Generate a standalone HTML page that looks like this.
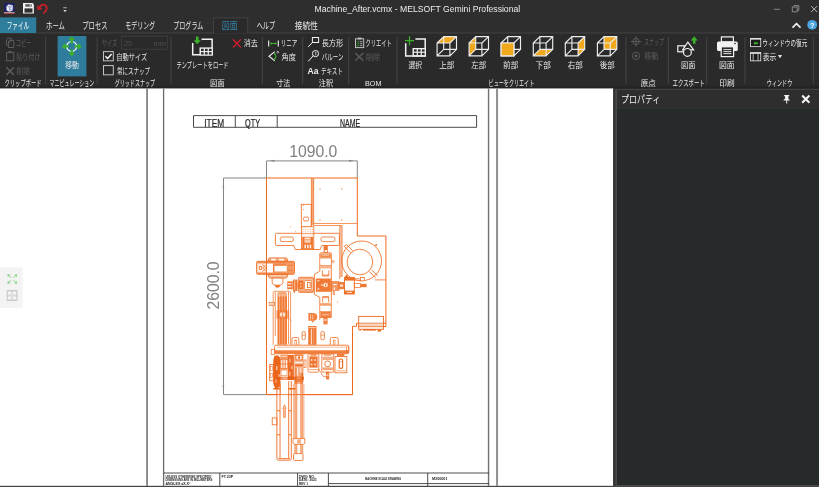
<!DOCTYPE html>
<html lang="ja"><head><meta charset="utf-8"><title>Machine_After.vcmx - MELSOFT Gemini Professional</title>
<style>
html,body{margin:0;padding:0;background:#fff}
body{width:819px;height:487px;overflow:hidden;position:relative;font-family:"Liberation Sans","Noto Sans CJK JP",sans-serif}
svg{position:absolute;left:0;top:0;display:block}
text{font-family:"Liberation Sans","Noto Sans CJK JP",sans-serif}
.n{font-family:"Liberation Sans",sans-serif}
</style></head><body>
<svg width="819" height="487" viewBox="0 0 819 487">
<defs><filter id="soft" x="-2%" y="-2%" width="104%" height="104%"><feGaussianBlur stdDeviation="0.32"/></filter></defs>
<g filter="url(#soft)">
<!-- window chrome -->
<rect x="-6" y="-6" width="831" height="499" fill="#ffffff"/>
<rect x="613.3" y="80" width="212" height="413" fill="#252525"/>
<rect x="613.3" y="88.8" width="212" height="405" fill="#333333"/>
<rect x="615.4" y="88.8" width="210" height="405" fill="#494949"/>
<rect x="617" y="89.8" width="208" height="18.6" fill="#2d2d2d"/>
<rect x="617" y="108.4" width="208" height="376.6" fill="#27292a"/>
<rect x="-6" y="-6" width="831" height="39" fill="#2f2f2f"/>
<rect x="-6" y="33" width="831" height="55.45" fill="#2a2a2a"/>
<rect x="-6" y="32.5" width="831" height="1" fill="#404040"/>
<rect x="-6" y="86.9" width="831" height="1.1" fill="#232323"/>
<!-- file tab -->
<rect x="-6" y="17.4" width="42.2" height="15.6" fill="#2d7d9c"/>
<!-- active tab -->
<path d="M213.5 33.2V17.8H247.7V33.2" fill="#2a2a2a" stroke="#414141" stroke-width="1"/>
<!-- move button highlight -->
<rect x="57.6" y="36" width="28.8" height="40.4" fill="#2d7d9c"/>
<!-- group separators -->
<g fill="#454545">
<rect x="45.2" y="37" width="1" height="47"/><rect x="96.6" y="37" width="1" height="47"/>
<rect x="170.4" y="37" width="1" height="47"/><rect x="261.8" y="37" width="1" height="47"/>
<rect x="302.2" y="37" width="1" height="47"/><rect x="348.2" y="37" width="1" height="47"/>
<rect x="396.6" y="37" width="1" height="47"/><rect x="625.4" y="37" width="1" height="47"/>
<rect x="667.8" y="37" width="1" height="47"/><rect x="706.2" y="37" width="1" height="47"/>
<rect x="744.4" y="37" width="1" height="47"/><rect x="812.8" y="37" width="1" height="47"/>
</g>
<!-- title text -->
<text x="314.6" y="12.4" font-size="9.1" fill="#ededed" textLength="205.6" lengthAdjust="spacingAndGlyphs">Machine_After.vcmx - MELSOFT Gemini Professional</text>
<!-- size input -->
<rect x="121.6" y="36.1" width="46" height="13.2" fill="#2a2a2a" stroke="#3d3d3d" stroke-width="1"/>
<text x="124" y="46" font-size="7.4" fill="#4f4f4f">25</text>
<text x="153.6" y="46" font-size="7.4" fill="#4f4f4f">mm</text>
<!-- BOM / Aa -->
<text x="365" y="85.6" font-size="7.8" fill="#eeeeee" textLength="16.4" lengthAdjust="spacingAndGlyphs">BOM</text>
<text x="307.6" y="74" font-size="8.6" font-weight="bold" fill="#eeeeee" textLength="11" lengthAdjust="spacingAndGlyphs">Aa</text>
<!-- canvas/panel splitter and properties panel -->
<rect x="-6" y="485.8" width="831" height="7" fill="#454545"/>
<!-- left floating toolbar -->
<rect x="-6" y="267.4" width="28.6" height="40.4" fill="#f3f3f3"/>

<g id="labels">
<text x="6.68" y="29.17" font-size="9.4" fill="#ffffff" textLength="22.55" lengthAdjust="spacingAndGlyphs">ファイル</text>
<text x="46.05" y="29.17" font-size="9.4" fill="#e8e8e8" textLength="18.82" lengthAdjust="spacingAndGlyphs">ホーム</text>
<text x="82.25" y="29.17" font-size="9.4" fill="#e8e8e8" textLength="25.33" lengthAdjust="spacingAndGlyphs">プロセス</text>
<text x="125.34" y="29.17" font-size="9.4" fill="#e8e8e8" textLength="29.86" lengthAdjust="spacingAndGlyphs">モデリング</text>
<text x="173.28" y="29.17" font-size="9.4" fill="#e8e8e8" textLength="30.07" lengthAdjust="spacingAndGlyphs">プログラム</text>
<text x="221.84" y="29.17" font-size="9.4" fill="#3584aa" textLength="16.07" lengthAdjust="spacingAndGlyphs">図面</text>
<text x="256.67" y="29.17" font-size="9.4" fill="#e8e8e8" textLength="18.44" lengthAdjust="spacingAndGlyphs">ヘルプ</text>
<text x="294.82" y="29.17" font-size="9.4" fill="#e8e8e8" textLength="23.03" lengthAdjust="spacingAndGlyphs">接続性</text>
<text x="15.66" y="45.93" font-size="8.25" fill="#5c5c5c" textLength="15.81" lengthAdjust="spacingAndGlyphs">コピー</text>
<text x="16.31" y="59.93" font-size="8.25" fill="#5c5c5c" textLength="24.08" lengthAdjust="spacingAndGlyphs">貼り付け</text>
<text x="16.16" y="73.94" font-size="8.25" fill="#5c5c5c" textLength="14" lengthAdjust="spacingAndGlyphs">削除</text>
<text x="4.52" y="85.73" font-size="8.25" fill="#e8e8e8" textLength="37.11" lengthAdjust="spacingAndGlyphs">クリップボード</text>
<text x="65.23" y="67.73" font-size="8.25" fill="#e8e8e8" textLength="13.76" lengthAdjust="spacingAndGlyphs">移動</text>
<text x="49.49" y="85.73" font-size="8.25" fill="#e8e8e8" textLength="44.87" lengthAdjust="spacingAndGlyphs">マニピュレーション</text>
<text x="101.67" y="45.93" font-size="8.25" fill="#5c5c5c" textLength="15.52" lengthAdjust="spacingAndGlyphs">サイズ</text>
<text x="116.33" y="59.93" font-size="8.25" fill="#e8e8e8" textLength="30.87" lengthAdjust="spacingAndGlyphs">自動サイズ</text>
<text x="116.90" y="73.94" font-size="8.25" fill="#e8e8e8" textLength="33.19" lengthAdjust="spacingAndGlyphs">常にスナップ</text>
<text x="114.74" y="85.73" font-size="8.25" fill="#e8e8e8" textLength="40.35" lengthAdjust="spacingAndGlyphs">グリッドスナップ</text>
<text x="176.51" y="67.73" font-size="8.25" fill="#e8e8e8" textLength="52.09" lengthAdjust="spacingAndGlyphs">テンプレートをロード</text>
<text x="243.76" y="45.93" font-size="8.25" fill="#e8e8e8" textLength="14.06" lengthAdjust="spacingAndGlyphs">消去</text>
<text x="209.89" y="85.73" font-size="8.25" fill="#e8e8e8" textLength="14.99" lengthAdjust="spacingAndGlyphs">図面</text>
<text x="280.85" y="45.93" font-size="8.25" fill="#e8e8e8" textLength="16.47" lengthAdjust="spacingAndGlyphs">リニア</text>
<text x="281.59" y="59.93" font-size="8.25" fill="#e8e8e8" textLength="14.26" lengthAdjust="spacingAndGlyphs">角度</text>
<text x="276.16" y="85.73" font-size="8.25" fill="#e8e8e8" textLength="14.02" lengthAdjust="spacingAndGlyphs">寸法</text>
<text x="321.64" y="45.93" font-size="8.25" fill="#e8e8e8" textLength="21.57" lengthAdjust="spacingAndGlyphs">長方形</text>
<text x="321.71" y="59.93" font-size="8.25" fill="#e8e8e8" textLength="21.68" lengthAdjust="spacingAndGlyphs">バルーン</text>
<text x="321.00" y="73.94" font-size="8.25" fill="#e8e8e8" textLength="21.77" lengthAdjust="spacingAndGlyphs">テキスト</text>
<text x="318.76" y="85.73" font-size="8.25" fill="#e8e8e8" textLength="14.42" lengthAdjust="spacingAndGlyphs">注釈</text>
<text x="365.55" y="45.93" font-size="8.25" fill="#e8e8e8" textLength="26.2" lengthAdjust="spacingAndGlyphs">クリエイト</text>
<text x="365.64" y="59.93" font-size="8.25" fill="#5c5c5c" textLength="14.53" lengthAdjust="spacingAndGlyphs">削除</text>
<text x="408.40" y="67.73" font-size="8.25" fill="#e8e8e8" textLength="13.52" lengthAdjust="spacingAndGlyphs">選択</text>
<text x="439.14" y="67.73" font-size="8.25" fill="#e8e8e8" textLength="15.11" lengthAdjust="spacingAndGlyphs">上部</text>
<text x="471.32" y="67.73" font-size="8.25" fill="#e8e8e8" textLength="14.92" lengthAdjust="spacingAndGlyphs">左部</text>
<text x="503.12" y="67.73" font-size="8.25" fill="#e8e8e8" textLength="15.13" lengthAdjust="spacingAndGlyphs">前部</text>
<text x="535.59" y="67.73" font-size="8.25" fill="#e8e8e8" textLength="15.16" lengthAdjust="spacingAndGlyphs">下部</text>
<text x="567.80" y="67.73" font-size="8.25" fill="#e8e8e8" textLength="14.94" lengthAdjust="spacingAndGlyphs">右部</text>
<text x="599.86" y="67.73" font-size="8.25" fill="#e8e8e8" textLength="14.88" lengthAdjust="spacingAndGlyphs">後部</text>
<text x="488.59" y="85.73" font-size="8.25" fill="#e8e8e8" textLength="45.66" lengthAdjust="spacingAndGlyphs">ビューをクリエイト</text>
<text x="644.03" y="45.33" font-size="8.25" fill="#5c5c5c" textLength="20.06" lengthAdjust="spacingAndGlyphs">スナップ</text>
<text x="644.32" y="59.33" font-size="8.25" fill="#5c5c5c" textLength="14.08" lengthAdjust="spacingAndGlyphs">移動</text>
<text x="640.78" y="85.73" font-size="8.25" fill="#e8e8e8" textLength="15.04" lengthAdjust="spacingAndGlyphs">原点</text>
<text x="680.91" y="67.73" font-size="8.25" fill="#e8e8e8" textLength="14.46" lengthAdjust="spacingAndGlyphs">図面</text>
<text x="672.56" y="85.73" font-size="8.25" fill="#e8e8e8" textLength="32.22" lengthAdjust="spacingAndGlyphs">エクスポート</text>
<text x="719.06" y="67.73" font-size="8.25" fill="#e8e8e8" textLength="15.64" lengthAdjust="spacingAndGlyphs">図面</text>
<text x="719.24" y="85.73" font-size="8.25" fill="#e8e8e8" textLength="15.32" lengthAdjust="spacingAndGlyphs">印刷</text>
<text x="762.35" y="45.93" font-size="8.25" fill="#e8e8e8" textLength="44.93" lengthAdjust="spacingAndGlyphs">ウィンドウの復元</text>
<text x="762.84" y="59.93" font-size="8.25" fill="#e8e8e8" textLength="13.54" lengthAdjust="spacingAndGlyphs">表示</text>
<text x="766.84" y="85.73" font-size="8.25" fill="#e8e8e8" textLength="25.41" lengthAdjust="spacingAndGlyphs">ウィンドウ</text>
<text x="621.03" y="102.63" font-size="10.6" fill="#f2f2f2" textLength="39.35" lengthAdjust="spacingAndGlyphs">プロパティ</text>
</g>
<g id="icons"><rect x="4" y="3" width="10.6" height="10.6" fill="#1b2460"/>
<path d="M6.3 6.2 L8.6 4.6 L12.4 5 L13.2 7 L12.6 10.4 L9.6 11.8 L6.6 10.6 Z" fill="#f4f4fa"/>
<path d="M8.8 6.6 L10 11 M8.8 6.6 L12.4 5.6 M8.8 6.6 L6.6 6.4" stroke="#8a93c8" stroke-width=".7" fill="none"/>
<circle cx="11.3" cy="8.2" r="1.5" fill="none" stroke="#6f7ab8" stroke-width=".7"/>
<rect x="4" y="12" width="10.6" height=".7" fill="#e8e8f0"/><rect x="4" y="12.8" width="10.6" height=".9" fill="#e2563f"/>
<path d="M23 3.1H32.6L33.9 4.4V13.6H23Z" fill="#f2f2f2"/>
<rect x="25.3" y="4.2" width="6.4" height="2.5" fill="#5a5a5a"/><rect x="29.7" y="4.5" width="1.2" height="1.7" fill="#d8d8d8"/>
<rect x="24.5" y="8.4" width="8" height="4.2" fill="#2f2f2f"/>
<path d="M43.6 12.9 C47.8 10.6 47.6 5.6 44.3 4.7 C42.2 4.2 40.5 5.6 39.6 7.4" fill="none" stroke="#cc1f2b" stroke-width="1.7" stroke-linecap="round"/>
<path d="M36.9 5.0 L37.6 10.3 L42.6 8.9 Z" fill="#cc1f2b"/>
<rect x="63.2" y="7.4" width="3.6" height=".8" fill="#cfcfcf"/><path d="M63.3 9.9H66.7L65 12.2Z" fill="#cfcfcf"/>
<g fill="none" stroke="#5e5e5e" stroke-width="1">
<path d="M8.2 45.2H6.4V39.6L7.8 38.2H11.2V40.2"/>
<path d="M8.4 47.5V41.8L9.8 40.4H13.8V47.5Z"/><path d="M8.4 42H10V40.4"/>
<rect x="6.6" y="52.6" width="7.2" height="8.2"/><path d="M8.8 52.6V51.4H11.6V52.6" />
</g>
<path d="M6.4 67.2L13.8 75M13.8 67.2L6.4 75" stroke="#5e5e5e" stroke-width="1.5" fill="none"/>
<circle cx="71.7" cy="46.4" r="4.9" fill="none" stroke="#ffffff" stroke-width="1.15"/>
<path d="M71.70 36.30 L75.00 40.10 L72.85 40.10 L72.85 43.40 L70.55 43.40 L70.55 40.10 L68.40 40.10 Z" fill="#3cb02c"/>
<path d="M71.70 56.50 L68.40 52.70 L70.55 52.70 L70.55 49.40 L72.85 49.40 L72.85 52.70 L75.00 52.70 Z" fill="#3cb02c"/>
<path d="M81.80 46.40 L78.00 49.70 L78.00 47.55 L74.70 47.55 L74.70 45.25 L78.00 45.25 L78.00 43.10 Z" fill="#3cb02c"/>
<path d="M61.60 46.40 L65.40 43.10 L65.40 45.25 L68.70 45.25 L68.70 47.55 L65.40 47.55 L65.40 49.70 Z" fill="#3cb02c"/>
<rect x="103.5" y="51.6" width="9.8" height="9.2" fill="#2a2a2a" stroke="#c4c4c4" stroke-width="1"/>
<path d="M105.4 56.2L107.6 58.4L111.6 54" fill="none" stroke="#ffffff" stroke-width="1.4"/>
<rect x="103.5" y="65.6" width="9.8" height="9.2" fill="#2a2a2a" stroke="#c4c4c4" stroke-width="1"/>
<path d="M201.5 39.2H212.1V54.8H192.7V43.0" fill="none" stroke="#f2f2f2" stroke-width="1.5"/><rect x="199.5" y="47.4" width="13.3" height="8.1" fill="#f2f2f2"/><rect x="200.95" y="48.75" width="2.75" height="2.3" fill="#2a2a2a"/><rect x="200.95" y="52.20" width="2.75" height="2.3" fill="#2a2a2a"/><rect x="204.90" y="48.75" width="2.75" height="2.3" fill="#2a2a2a"/><rect x="204.90" y="52.20" width="2.75" height="2.3" fill="#2a2a2a"/><rect x="208.85" y="48.75" width="2.75" height="2.3" fill="#2a2a2a"/><rect x="208.85" y="52.20" width="2.75" height="2.3" fill="#2a2a2a"/>
<path d="M195.9 36.6H198.6V40.2H200.8L197.25 44.2L193.7 40.2H195.9Z" fill="#3cb02c"/>
<path d="M233 39.2L240.8 47.4M240.8 39.2L233 47.4" stroke="#cc1f2b" stroke-width="1.4" fill="none"/>
<path d="M268.7 40.4V46.6M278.3 40.4V46.6" stroke="#f2f2f2" stroke-width="1.1"/>
<path d="M270.6 43.5H276.4" stroke="#3cb02c" stroke-width="1"/><path d="M269.6 43.5L271.8 42.2V44.8ZM277.4 43.5L275.2 42.2V44.8Z" fill="#3cb02c"/>
<path d="M274.8 51.6L269 56.2L274.8 60.9" fill="none" stroke="#f2f2f2" stroke-width="1.1"/>
<path d="M274.6 54C276.4 55.2 276.4 57.6 274.6 58.8" fill="none" stroke="#3cb02c" stroke-width="1.1"/><path d="M273.6 53.2L275.8 53.6L274.6 55.2ZM273.6 59.6L275.8 59.2L274.6 57.6Z" fill="#3cb02c"/>
<circle cx="277.8" cy="52.2" r=".9" fill="none" stroke="#f2f2f2" stroke-width=".6"/>
<rect x="312.4" y="37.5" width="6.2" height="5" fill="none" stroke="#f2f2f2" stroke-width="1"/><path d="M312.4 42.5L308.2 46.9" stroke="#f2f2f2" stroke-width="1"/>
<circle cx="315.5" cy="53.6" r="3.1" fill="none" stroke="#f2f2f2" stroke-width="1"/><path d="M313.2 55.8L308.2 61.4" stroke="#f2f2f2" stroke-width="1"/><path d="M315.1 52.6L315.8 52V55.3" stroke="#f2f2f2" stroke-width=".7" fill="none"/>
<rect x="355.5" y="38.8" width="8.2" height="8.8" fill="none" stroke="#c0c0c0" stroke-width="1"/><rect x="357.6" y="37.6" width="4" height="1.8" fill="#c0c0c0"/>
<path d="M359.8 41.6H362.4M359.8 43.6H362.4M359.8 45.6H362.4" stroke="#c0c0c0" stroke-width=".8"/>
<path d="M356.8 41.4L357.6 42.2L358.9 40.6M356.8 43.6L357.6 44.4L358.9 42.8M356.8 45.6L357.6 46.4L358.9 44.8" stroke="#3cb02c" stroke-width=".8" fill="none"/>
<path d="M355.2 53L363.4 60.8M363.4 53L355.2 60.8" stroke="#5c5c5c" stroke-width="1.4" fill="none"/>
<path d="M415.4 38.9H425.2V55.9H405.7V43.2" fill="none" stroke="#f2f2f2" stroke-width="1.5"/><rect x="412.5" y="48.0" width="13.4" height="8.6" fill="#f2f2f2"/><rect x="413.95" y="49.35" width="2.75" height="2.3" fill="#2a2a2a"/><rect x="413.95" y="52.80" width="2.75" height="2.3" fill="#2a2a2a"/><rect x="417.90" y="49.35" width="2.75" height="2.3" fill="#2a2a2a"/><rect x="417.90" y="52.80" width="2.75" height="2.3" fill="#2a2a2a"/><rect x="421.85" y="49.35" width="2.75" height="2.3" fill="#2a2a2a"/><rect x="421.85" y="52.80" width="2.75" height="2.3" fill="#2a2a2a"/>
<path d="M405 40.7H414M409.5 36.2V45.2" stroke="#3cb02c" stroke-width="1.3"/>
<polygon points="437.1,43.0 443.7,36.6 456.5,36.6 449.9,43.0" fill="#f2a81d"/><path d="M437.1 43.0H449.9V55.8H437.1ZM443.7 36.6H456.5V49.4H443.7ZM437.1 43.0L443.7 36.6M449.9 43.0L456.5 36.6M449.9 55.8L456.5 49.4M437.1 55.8L443.7 49.4" fill="none" stroke="#ececec" stroke-width="1.15"/>
<polygon points="469.1,43.0 475.7,36.6 475.7,49.4 469.1,55.8" fill="#f2a81d"/><path d="M469.1 43.0H481.9V55.8H469.1ZM475.7 36.6H488.5V49.4H475.7ZM469.1 43.0L475.7 36.6M481.9 43.0L488.5 36.6M481.9 55.8L488.5 49.4M469.1 55.8L475.7 49.4" fill="none" stroke="#ececec" stroke-width="1.15"/>
<polygon points="501.1,43.0 513.9,43.0 513.9,55.8 501.1,55.8" fill="#f2a81d"/><path d="M501.1 43.0H513.9V55.8H501.1ZM507.7 36.6H520.5V49.4H507.7ZM501.1 43.0L507.7 36.6M513.9 43.0L520.5 36.6M513.9 55.8L520.5 49.4M501.1 55.8L507.7 49.4" fill="none" stroke="#ececec" stroke-width="1.15"/><polygon points="501.1,43.0 513.9,43.0 513.9,55.8 501.1,55.8" fill="#f2a81d" stroke="#ececec" stroke-width="1.15"/>
<polygon points="533.3,55.8 539.9,49.4 552.7,49.4 546.1,55.8" fill="#f2a81d"/><path d="M533.3 43.0H546.1V55.8H533.3ZM539.9 36.6H552.7V49.4H539.9ZM533.3 43.0L539.9 36.6M546.1 43.0L552.7 36.6M546.1 55.8L552.7 49.4M533.3 55.8L539.9 49.4" fill="none" stroke="#ececec" stroke-width="1.15"/>
<polygon points="578.1,43.0 584.7,36.6 584.7,49.4 578.1,55.8" fill="#f2a81d"/><path d="M565.3 43.0H578.1V55.8H565.3ZM571.9 36.6H584.7V49.4H571.9ZM565.3 43.0L571.9 36.6M578.1 43.0L584.7 36.6M578.1 55.8L584.7 49.4M565.3 55.8L571.9 49.4" fill="none" stroke="#ececec" stroke-width="1.15"/>
<polygon points="604.0,36.6 616.8,36.6 616.8,49.4 604.0,49.4" fill="#f2a81d"/><path d="M597.4 43.0H610.2V55.8H597.4ZM604.0 36.6H616.8V49.4H604.0ZM597.4 43.0L604.0 36.6M610.2 43.0L616.8 36.6M610.2 55.8L616.8 49.4M597.4 55.8L604.0 49.4" fill="none" stroke="#ececec" stroke-width="1.15"/>
<g fill="none" stroke="#5e5e5e" stroke-width=".9"><circle cx="636" cy="41.5" r="3.2"/><path d="M636 36.4V46.6M630.9 41.5H641.1"/><circle cx="636" cy="55.9" r="3.7"/></g><circle cx="636" cy="55.9" r="1.4" fill="#5e5e5e"/>
<g fill="#2a2a2a" stroke="#f2f2f2" stroke-width="1.2"><rect x="677.8" y="45.8" width="6.6" height="6"/><path d="M687.8 42.2L693.6 49.8H682.6Z"/><circle cx="687.4" cy="52.4" r="3.9"/></g>
<path d="M692.9 43.8V40.4H690.8L694.2 36.3L697.6 40.4H695.5V43.8Z" fill="#3cb02c"/>
<rect x="721.4" y="36.9" width="12" height="5" fill="none" stroke="#f2f2f2" stroke-width="1.2"/>
<rect x="717" y="41.5" width="20.8" height="9.6" rx="1.6" fill="#f2f2f2"/>
<rect x="721.2" y="46.8" width="12.4" height="9.8" fill="#2a2a2a" stroke="#f2f2f2" stroke-width="1.2"/>
<path d="M723.4 49.6H731.4M723.4 51.6H731.4M723.4 53.6H731.4" stroke="#f2f2f2" stroke-width=".9"/>
<circle cx="735" cy="43.6" r=".8" fill="#2a2a2a"/>
<rect x="750.5" y="38.6" width="10.2" height="8" fill="#1f1f1f" stroke="#d6d6d6" stroke-width=".9"/><rect x="750.1" y="38.1" width="11" height="1.5" fill="#e4e4e4"/>
<path d="M753.4 43.2L755.6 41.4V42.6H758V43.9H755.6V45Z" fill="#3cb02c"/>
<rect x="750.5" y="52.8" width="10.2" height="8" fill="#1f1f1f" stroke="#d6d6d6" stroke-width=".9"/><rect x="750.1" y="52.3" width="11" height="1.5" fill="#e4e4e4"/><path d="M753.2 53V61M758 53V61" stroke="#d6d6d6" stroke-width=".8"/>
<path d="M777.9 55H782L779.95 58.2Z" fill="#e6e6e6"/>
<rect x="773.8" y="8.8" width="6.2" height=".9" fill="#8e8e8e"/>
<g fill="none" stroke="#8e8e8e" stroke-width=".9"><rect x="792.3" y="7" width="4.8" height="4.8"/><path d="M794 7V5.6H798.8V10.4H797.2"/></g>
<path d="M811.2 6.1L817.1 12M817.1 6.1L811.2 12" stroke="#b8b8b8" stroke-width="1" fill="none"/>
<path d="M792.5 27.6L796.5 23.6L800.5 27.6" fill="none" stroke="#f4f4f4" stroke-width="1.5"/>
<circle cx="812.2" cy="24.8" r="4.9" fill="#4ba3df"/><text x="812.2" y="27.6" font-size="7.6" font-weight="bold" text-anchor="middle" fill="#ffffff">?</text>
<path d="M784.2 95H789.2V96.2H788.3V98.6L790 100.4H787.2V103.4H786.2V100.4H783.2L785.1 98.6V96.2H784.2Z" fill="#f4f4f4"/>
<path d="M802.2 95.6L809.4 102.8M809.4 95.6L802.2 102.8" stroke="#f4f4f4" stroke-width="2.1" fill="none"/>
<path d="M11.1 277.8L7.7 274.4" stroke="#86d486" stroke-width="1"/><path d="M7.7 274.4L10.5 274.4L7.7 277.2Z" fill="#86d486"/><path d="M13.5 277.8L16.9 274.4" stroke="#86d486" stroke-width="1"/><path d="M16.9 274.4L14.1 274.4L16.9 277.2Z" fill="#86d486"/><path d="M11.1 280.2L7.7 283.6" stroke="#86d486" stroke-width="1"/><path d="M7.7 283.6L10.5 283.6L7.7 280.8Z" fill="#86d486"/><path d="M13.5 280.2L16.9 283.6" stroke="#86d486" stroke-width="1"/><path d="M16.9 283.6L14.1 283.6L16.9 280.8Z" fill="#86d486"/>
<rect x="7.2" y="290.6" width="9.8" height="9.8" fill="#dcdcdc" stroke="#c2c2c2" stroke-width=".8"/>
<path d="M11.3 294.7L8.5 291.9" stroke="#ffffff" stroke-width="1"/><path d="M8.5 291.9L11.3 291.9L8.5 294.7Z" fill="#ffffff"/><path d="M12.9 294.7L15.7 291.9" stroke="#ffffff" stroke-width="1"/><path d="M15.7 291.9L12.9 291.9L15.7 294.7Z" fill="#ffffff"/><path d="M11.3 296.3L8.5 299.1" stroke="#ffffff" stroke-width="1"/><path d="M8.5 299.1L11.3 299.1L8.5 296.3Z" fill="#ffffff"/><path d="M12.9 296.3L15.7 299.1" stroke="#ffffff" stroke-width="1"/><path d="M15.7 299.1L12.9 299.1L15.7 296.3Z" fill="#ffffff"/></g>
<g id="drawing"><path d="M147.05 88.5V486" fill="none" stroke="#6a6a6a" stroke-width="1.5"/>
<path d="M163.6 88.5V486" fill="none" stroke="#6a6a6a" stroke-width="1.3"/>
<path d="M488.55 88.5V486" fill="none" stroke="#707070" stroke-width="1.4"/>
<path d="M497.05 88.5V486" fill="none" stroke="#909090" stroke-width="2.0"/>
<path d="M193.5 115.6H476.6V127.3H193.5ZM235.3 115.6V127.3M277.2 115.6V127.3" fill="none" stroke="#4a4a4a" stroke-width="1.0"/>
<text x="204.3" y="127" font-size="10.2" fill="#222" stroke="#222" stroke-width=".2" textLength="19.8" lengthAdjust="spacingAndGlyphs">ITEM</text>
<text x="245" y="127" font-size="10.2" fill="#222" stroke="#222" stroke-width=".2" textLength="15" lengthAdjust="spacingAndGlyphs">QTY</text>
<text x="340" y="127" font-size="10.2" fill="#222" stroke="#222" stroke-width=".2" textLength="20.2" lengthAdjust="spacingAndGlyphs">NAME</text>
<path d="M163.6 473H489.1M219.8 473V486M297.6 473V486M328.4 473V486M427.7 473V486M328.4 483.6H489.1" fill="none" stroke="#3a3a3a" stroke-width="0.9"/>
<text x="165.4" y="477.6" font-size="3.9" font-weight="bold" fill="#1c1c1c" textLength="46" lengthAdjust="spacingAndGlyphs">UNLESS OTHERWISE SPECIFIED</text>
<text x="165.4" y="481.2" font-size="3.9" font-weight="bold" fill="#1c1c1c" textLength="47" lengthAdjust="spacingAndGlyphs">DIMENSIONS ARE IN MILLIMETERS</text>
<text x="165.4" y="484.8" font-size="3.9" font-weight="bold" fill="#1c1c1c" textLength="25" lengthAdjust="spacingAndGlyphs">ANGLES ±X.X°</text>
<text x="221.6" y="477.8" font-size="3.9" font-weight="bold" fill="#1c1c1c" textLength="11.5" lengthAdjust="spacingAndGlyphs">FT.23P</text>
<text x="299" y="477.6" font-size="3.9" font-weight="bold" fill="#1c1c1c" textLength="16" lengthAdjust="spacingAndGlyphs">DWG NO.</text>
<text x="299" y="481.2" font-size="3.9" font-weight="bold" fill="#1c1c1c" textLength="17.5" lengthAdjust="spacingAndGlyphs">DATE: 2023</text>
<text x="299" y="484.8" font-size="3.9" font-weight="bold" fill="#1c1c1c" textLength="9" lengthAdjust="spacingAndGlyphs">REV 1</text>
<text x="365" y="480.2" font-size="3.9" font-weight="bold" fill="#1c1c1c" textLength="36" lengthAdjust="spacingAndGlyphs">MACHINE SCALE DRAWING</text>
<text x="432" y="480.2" font-size="3.9" font-weight="bold" fill="#1c1c1c" textLength="15.5" lengthAdjust="spacingAndGlyphs">M300001</text>
<path d="M266.5 160.9H357.3M266.5 160.9V178M357.3 160.9V178" fill="none" stroke="#858585" stroke-width="1"/>
<path d="M223.5 178V394.6M223.5 178H266.5M223.5 394.6H266.5" fill="none" stroke="#858585" stroke-width="1"/>
<path d="M269.6 160.8L274.6 159.8V161.8ZM354 160.8L349 159.8V161.8ZM223.4 182.4L222.5 187.4H224.3ZM223.4 390.4L222.5 385.4H224.3Z" fill="#858585"/>
<text x="289.2" y="156.5" font-size="16.2" fill="#808080" textLength="48.2" lengthAdjust="spacingAndGlyphs">1090.0</text>
<text transform="translate(207.2 310.1) rotate(-90)" x="0.5" y="12.1" font-size="16.2" fill="#808080" textLength="48.2" lengthAdjust="spacingAndGlyphs">2600.0</text>
<g id="machine" stroke-linejoin="miter">
<path d="M352.5 394.6H266.5V178H357.3V236H385.9V326.5H383.5M385.9 323.2H383.5M358.7 323.2H356.6V326.3H352.5V394.6" fill="none" stroke="#ee6b1f" stroke-width="1"/>
<rect x="311.40" y="178.20" width="2.30" height="47.20" fill="#f08a4c" opacity="0.75"/>
<path d="M311.4 178.2V226M313.7 178.2V225.5M313.7 223.5H357.3M313.7 225.5H342" fill="none" stroke="#ee6b1f" stroke-width="0.7"/>
<rect x="319.40" y="188.40" width="1.20" height="1.20" fill="#ee6b1f" opacity="0.80"/>
<rect x="341.00" y="188.40" width="1.20" height="1.20" fill="#ee6b1f" opacity="0.80"/>
<rect x="319.40" y="219.40" width="1.20" height="1.20" fill="#ee6b1f" opacity="0.80"/>
<rect x="341.00" y="219.40" width="1.20" height="1.20" fill="#ee6b1f" opacity="0.80"/>
<rect x="290.30" y="226.50" width="1.00" height="1.00" fill="#ee6b1f" opacity="0.70"/>
<rect x="295.20" y="230.80" width="1.00" height="1.00" fill="#ee6b1f" opacity="0.70"/>
<rect x="301.30" y="204.30" width="9.90" height="22.70" fill="none" stroke="#ee6b1f" stroke-width="0.8"/>
<rect x="303.40" y="217.10" width="5.20" height="3.80" fill="none" stroke="#ee6b1f" stroke-width="0.8" rx="1.3"/>
<rect x="303.00" y="205.00" width="0.80" height="0.80" fill="#ee6b1f"/>
<rect x="303.20" y="209.00" width="0.80" height="0.80" fill="#ee6b1f"/>
<path d="M339.8 225.5V279M342 225.5V277" fill="none" stroke="#ee6b1f" stroke-width="0.8"/>
<rect x="339.80" y="225.50" width="2.20" height="51.50" fill="#f08a4c" opacity="0.40"/>
<path d="M277 233.3H338.2Q339.4 233.3 339.4 234.5V244.3Q339.4 245.5 338.2 245.5H321.8L320.2 249.5H295.2L293.8 245.5H276.6Q275.4 245.5 275.4 244.3V234.5Q275.4 233.3 276.6 233.3Z" fill="none" stroke="#ee6b1f" stroke-width="0.85"/>
<rect x="280.30" y="237.00" width="13.00" height="4.60" fill="none" stroke="#ee6b1f" stroke-width="0.8" rx="1.6"/>
<rect x="321.00" y="237.00" width="13.90" height="4.60" fill="none" stroke="#ee6b1f" stroke-width="0.8" rx="1.6"/>
<rect x="301.40" y="226.80" width="12.40" height="21.80" fill="#ffffff" stroke="#ee6b1f" stroke-width="0.8"/>
<rect x="302.20" y="236.80" width="11.00" height="11.60" fill="#ee6b1f" opacity="0.92"/>
<rect x="304.60" y="237.60" width="5.80" height="5.00" fill="#ffffff" opacity="0.90"/>
<path d="M305 239.4H310M305 241H310" fill="none" stroke="#ee6b1f" stroke-width="0.6"/>
<rect x="304.40" y="244.60" width="1.60" height="3.60" fill="#ffffff" opacity="0.85"/>
<rect x="307.00" y="244.60" width="1.60" height="3.60" fill="#ffffff" opacity="0.85"/>
<rect x="309.60" y="244.60" width="1.60" height="3.60" fill="#ffffff" opacity="0.85"/>
<path d="M303 229V236M305.4 229V236M307.8 229V236M310.2 229V236M312.2 229V236" fill="none" stroke="#ee6b1f" stroke-width="0.5" stroke-dasharray="1 1.2"/>
<path d="M301.4 233.4H313.8" fill="none" stroke="#ee6b1f" stroke-width="0.6"/>
<circle cx="361.6" cy="260.9" r="19.9" fill="none" stroke="#ee6b1f" stroke-width=".85"/>
<circle cx="359.9" cy="262" r="12.8" fill="#ffffff" stroke="#ee6b1f" stroke-width=".85"/>
<path d="M344.2 246.4L350.6 252.8M346.6 244.6L352.6 250.6M344.2 246.4L346.6 244.6M369.4 271.6L375.8 278M371.6 269.8L377.6 275.8" fill="none" stroke="#ee6b1f" stroke-width="0.85"/>
<path d="M375 279.9H385.9" fill="none" stroke="#ee6b1f" stroke-width="0.8"/>
<rect x="375.20" y="244.00" width="1.80" height="2.00" fill="#ee6b1f" opacity="0.80"/>
<path d="M258 261.3H293Q294.5 261.3 294.5 262.8V272.8Q294.5 274.3 293 274.3H258Q256.6 274.3 256.6 272.8V262.8Q256.6 261.3 258 261.3Z" fill="#ee6b1f" fill-opacity=".3" stroke="#ee6b1f" stroke-width=".9"/>
<path d="M269.4 257.9H286.4L287.6 259V261.3H268.2V259Z" fill="#ee6b1f" fill-opacity=".55" stroke="#ee6b1f" stroke-width=".8"/>
<rect x="271.20" y="258.80" width="4.40" height="1.70" fill="#ffffff" opacity="0.95"/>
<rect x="279.00" y="258.80" width="5.00" height="1.70" fill="#ffffff" opacity="0.95"/>
<path d="M268.2 274.3H287.6V276.6L286 278.1H269.8L268.2 276.6Z" fill="#ee6b1f" fill-opacity=".5" stroke="#ee6b1f" stroke-width=".8"/>
<rect x="270.00" y="275.40" width="16.00" height="1.00" fill="#ffffff" opacity="0.50"/>
<path d="M272.2 278.1H282.9V283L281 285.2H274L272.2 283Z" fill="#ffffff" stroke="#ee6b1f" stroke-width=".8"/>
<path d="M274.6 285.2H280.4L279 287.4H276Z" fill="#ee6b1f"/>
<rect x="257.40" y="261.80" width="36.40" height="1.60" fill="#ee6b1f" opacity="0.70"/>
<rect x="257.40" y="272.40" width="36.40" height="1.50" fill="#ee6b1f" opacity="0.70"/>
<rect x="287.00" y="263.40" width="6.80" height="9.00" fill="#ee6b1f" opacity="0.55"/>
<path d="M287.2 265.4H293.6M287.2 270.4H293.6" fill="none" stroke="#ee6b1f" stroke-width="0.6"/>
<rect x="273.00" y="263.40" width="1.60" height="9.00" fill="#ee6b1f" opacity="0.80"/>
<rect x="274.60" y="263.40" width="12.00" height="2.40" fill="#ee6b1f" opacity="0.75"/>
<rect x="274.60" y="271.40" width="12.00" height="1.00" fill="#ee6b1f" opacity="0.60"/>
<rect x="274.60" y="266.00" width="11.80" height="5.30" fill="#ffffff"/>
<rect x="266.90" y="263.80" width="6.00" height="8.60" fill="#ffffff"/>
<rect x="257.60" y="263.60" width="8.40" height="8.60" fill="#ffffff" opacity="0.55"/>
<path d="M262.2 264.4L266.2 268L262.2 271.6M266.2 264.4L262.6 268L266.2 271.6" fill="none" stroke="#ee6b1f" stroke-width="0.7"/>
<rect x="259.30" y="266.40" width="2.30" height="3.00" fill="none" stroke="#ee6b1f" stroke-width="0.7"/>
<path d="M266.5 257V262" fill="none" stroke="#ee6b1f" stroke-width="0.8"/>
<path d="M299.4 277.3H312.4Q313.5 277.3 313.5 278.4V291.3Q313.5 292.4 312.4 292.4H299.4Q298.4 292.4 298.4 291.3V278.4Q298.4 277.3 299.4 277.3Z" fill="#ee6b1f" fill-opacity=".32" stroke="#ee6b1f" stroke-width=".8"/>
<rect x="299.00" y="277.80" width="14.00" height="1.60" fill="#ee6b1f" opacity="0.40"/>
<rect x="299.00" y="290.20" width="14.00" height="1.70" fill="#ee6b1f" opacity="0.50"/>
<rect x="304.40" y="280.60" width="7.20" height="8.80" fill="#ffffff" stroke="#ee6b1f" stroke-width="0.8" rx="0.8"/>
<rect x="307.40" y="282.60" width="2.80" height="5.00" fill="none" stroke="#ee6b1f" stroke-width="0.8"/>
<rect x="298.80" y="280.40" width="4.80" height="9.00" fill="#ee6b1f" opacity="0.90"/>
<rect x="300.40" y="283.00" width="1.00" height="1.40" fill="#ffffff" opacity="0.90"/>
<rect x="300.40" y="286.00" width="1.00" height="1.40" fill="#ffffff" opacity="0.90"/>
<rect x="287.20" y="281.40" width="5.40" height="7.80" fill="#ee6b1f" opacity="0.92"/>
<rect x="287.60" y="283.20" width="3.80" height="1.20" fill="#ffffff" opacity="0.90"/>
<rect x="287.60" y="286.20" width="3.80" height="1.20" fill="#ffffff" opacity="0.90"/>
<rect x="292.80" y="279.60" width="4.60" height="11.40" fill="#ee6b1f" opacity="0.90"/>
<rect x="294.40" y="280.00" width="0.80" height="10.60" fill="#ffffff" opacity="0.60"/>
<path d="M293.2 291L294.2 293.6L295.2 291Z" fill="#ee6b1f"/>
<rect x="297.40" y="283.00" width="1.20" height="4.60" fill="#ee6b1f" opacity="0.80"/>
<rect x="323.60" y="245.60" width="4.20" height="7.20" fill="#ee6b1f" opacity="0.90"/>
<rect x="324.60" y="250.00" width="2.40" height="1.90" fill="#ffffff" opacity="0.90"/>
<path d="M319.8 271V253.6Q319.8 252.8 320.6 252.8H330.5Q331.3 252.8 331.3 253.6V300M319.8 271L314.4 274.4V294.4L319.8 297.4V320" fill="none" stroke="#ee6b1f" stroke-width="0.85"/>
<rect x="320.40" y="253.60" width="10.40" height="4.00" fill="#ee6b1f" opacity="0.80"/>
<rect x="322.00" y="254.60" width="7.00" height="0.80" fill="#ffffff" opacity="0.80"/>
<rect x="320.60" y="258.60" width="10.00" height="5.60" fill="#ffffff"/>
<path d="M320 265.6H331M320 258H331" fill="none" stroke="#ee6b1f" stroke-width="0.7"/>
<rect x="320.40" y="266.20" width="10.40" height="2.20" fill="#ee6b1f" opacity="0.55"/>
<path d="M322.4 270.4V276H328.8V270.4" fill="none" stroke="#ee6b1f" stroke-width="0.8"/>
<rect x="323.00" y="274.40" width="5.20" height="1.40" fill="#ee6b1f" opacity="0.60"/>
<path d="M332 260.4L334.6 261.6L332 262.8Z" fill="none" stroke="#ee6b1f" stroke-width=".6"/>
<rect x="315.80" y="278.50" width="15.00" height="13.30" fill="#ee6b1f" opacity="0.90"/>
<rect x="330.80" y="281.00" width="8.60" height="10.00" fill="#ee6b1f" opacity="0.70"/>
<circle cx="325.6" cy="285" r="2.3" fill="#ffffff" fill-opacity=".9"/>
<rect x="325.00" y="283.60" width="1.40" height="3.00" fill="#ee6b1f" opacity="0.80"/>
<rect x="317.40" y="280.20" width="2.00" height="1.20" fill="#ffffff" opacity="0.80"/>
<rect x="317.40" y="288.40" width="2.00" height="1.20" fill="#ffffff" opacity="0.80"/>
<rect x="321.00" y="284.40" width="1.60" height="1.40" fill="#ffffff" opacity="0.80"/>
<rect x="333.00" y="284.00" width="3.60" height="1.20" fill="#ffffff" opacity="0.80"/>
<rect x="333.60" y="287.40" width="1.40" height="2.60" fill="#ffffff" opacity="0.80"/>
<rect x="332.60" y="291.00" width="2.40" height="4.00" fill="#ee6b1f" opacity="0.60"/>
<path d="M322.6 302V296.6H328.6V302" fill="none" stroke="#ee6b1f" stroke-width="0.8"/>
<rect x="323.20" y="296.80" width="4.80" height="1.40" fill="#ee6b1f" opacity="0.60"/>
<rect x="320.40" y="302.80" width="10.20" height="2.20" fill="#ee6b1f" opacity="0.55"/>
<rect x="320.60" y="305.40" width="9.80" height="5.60" fill="#ffffff"/>
<path d="M320 305.2H331M320 311.6H331" fill="none" stroke="#ee6b1f" stroke-width="0.7"/>
<rect x="320.40" y="312.00" width="10.40" height="5.40" fill="#ee6b1f" opacity="0.85"/>
<rect x="322.00" y="314.40" width="7.00" height="0.80" fill="#ffffff" opacity="0.70"/>
<path d="M331.3 300V317.4H319.8" fill="none" stroke="#ee6b1f" stroke-width="0.8"/>
<rect x="323.40" y="317.40" width="4.20" height="7.00" fill="#ee6b1f" opacity="0.85"/>
<rect x="324.60" y="319.00" width="1.80" height="2.00" fill="#ffffff" opacity="0.70"/>
<rect x="338.40" y="282.00" width="6.10" height="7.20" fill="#ee6b1f" opacity="0.85"/>
<rect x="340.00" y="284.60" width="3.00" height="2.00" fill="#ffffff" opacity="0.85"/>
<rect x="344.50" y="277.40" width="9.80" height="16.60" fill="#ffffff" stroke="#ee6b1f" stroke-width="0.9"/>
<rect x="344.50" y="277.40" width="9.80" height="3.20" fill="#ee6b1f" opacity="0.95"/>
<rect x="344.50" y="290.60" width="9.80" height="3.40" fill="#ee6b1f" opacity="0.95"/>
<rect x="347.00" y="291.80" width="5.00" height="1.00" fill="#ffffff" opacity="0.80"/>
<circle cx="346.6" cy="276.2" r="1.3" fill="#ee6b1f"/>
<rect x="354.30" y="283.60" width="6.30" height="4.00" fill="none" stroke="#ee6b1f" stroke-width="0.7"/>
<rect x="360.60" y="283.80" width="6.00" height="3.40" fill="#ee6b1f" opacity="0.90"/>
<rect x="360.60" y="277.40" width="4.00" height="3.40" fill="#ffffff" stroke="#ee6b1f" stroke-width="0.7"/>
<path d="M354.3 278.6H360.6M354.3 280.2H360.6" fill="none" stroke="#ee6b1f" stroke-width="0.6"/>
<path d="M273.2 344.6V292.6Q273.2 291.3 274.5 291.3H289.3Q290.6 291.3 290.6 292.6V344.6M275.3 292V336M288.5 292V344" fill="none" stroke="#ee6b1f" stroke-width="0.7"/>
<rect x="277.50" y="293.00" width="9.50" height="51.60" fill="#ee6b1f" opacity="0.90"/>
<path d="M279.6 294V344M282.2 294V344M284.8 294V344" fill="none" stroke="#f9c3a2" stroke-width="0.7"/>
<rect x="277.50" y="293.00" width="9.50" height="3.40" fill="#ffffff" opacity="0.35"/>
<rect x="278.40" y="292.00" width="7.60" height="1.20" fill="#ee6b1f" opacity="0.60"/>
<rect x="276.40" y="310.30" width="12.80" height="8.50" fill="#ee6b1f" opacity="0.55"/>
<circle cx="282.6" cy="314.5" r="3.1" fill="#ffffff" fill-opacity=".92" stroke="#ee6b1f" stroke-width=".7"/>
<path d="M281 313H284M281 316H284M282.5 312V317" fill="none" stroke="#ee6b1f" stroke-width="0.6"/>
<path d="M289.4 318.8L291.4 321" fill="none" stroke="#ee6b1f" stroke-width="0.6"/>
<rect x="269.20" y="302.60" width="5.20" height="3.00" fill="#ffffff" stroke="#ee6b1f" stroke-width="0.7"/>
<rect x="270.60" y="303.40" width="3.00" height="1.40" fill="#ee6b1f" opacity="0.50"/>
<path d="M308.4 313.1H313.2Q317.3 313.1 317.3 316.9Q317.3 320.7 313.2 320.7H308.4Z" fill="#ee6b1f" fill-opacity=".85"/>
<rect x="310.20" y="314.40" width="0.80" height="5.00" fill="#ffffff" opacity="0.60"/>
<rect x="312.40" y="314.40" width="0.80" height="5.00" fill="#ffffff" opacity="0.60"/>
<path d="M311.2 320.7H314.4L312.8 322.8Z" fill="#ee6b1f" fill-opacity=".8"/>
<rect x="308.20" y="326.00" width="8.30" height="18.80" fill="#ee6b1f" opacity="0.90"/>
<path d="M311.4 329V344.6" fill="none" stroke="#ffffff" stroke-width="0.8"/>
<path d="M309.2 327.6H315.6" fill="none" stroke="#ffffff" stroke-width="0.7"/>
<path d="M313.8 329V344.6" fill="none" stroke="#f7b48c" stroke-width="0.6"/>
<rect x="302.10" y="331.40" width="3.20" height="8.40" fill="none" stroke="#ee6b1f" stroke-width="0.8" rx="1.5"/>
<path d="M302.1 335.2H305.3" fill="none" stroke="#ee6b1f" stroke-width="0.6"/>
<rect x="320.90" y="331.40" width="3.50" height="8.40" fill="none" stroke="#ee6b1f" stroke-width="0.8" rx="1.5"/>
<path d="M320.9 335.2H324.4" fill="none" stroke="#ee6b1f" stroke-width="0.6"/>
<path d="M292 345V339Q292 337.5 293.5 337.5H297.3Q298.8 337.5 298.8 339V345M330.3 345V339Q330.3 337.5 331.8 337.5H336.7Q338.2 337.5 338.2 339V345" fill="none" stroke="#ee6b1f" stroke-width="0.8"/>
<rect x="294.90" y="340.00" width="1.60" height="8.60" fill="#ffffff" stroke="#ee6b1f" stroke-width="0.6"/>
<rect x="333.40" y="340.00" width="1.60" height="8.60" fill="#ffffff" stroke="#ee6b1f" stroke-width="0.6"/>
<path d="M276 345.2H347.3Q348.8 345.2 348.8 346.7V352.2Q348.8 353.7 347.3 353.7H276Q274.5 353.7 274.5 352.2V346.7Q274.5 345.2 276 345.2Z" fill="#ffffff" stroke="#ee6b1f" stroke-width=".85"/>
<rect x="275.00" y="350.00" width="73.40" height="3.40" fill="#ee6b1f" opacity="0.88"/>
<path d="M276 350.6H346" fill="none" stroke="#f9c3a2" stroke-width="0.6"/>
<path d="M277 347.2H346" fill="none" stroke="#ee6b1f" stroke-width="0.45"/>
<rect x="271.20" y="349.60" width="3.30" height="5.00" fill="#ffffff" stroke="#ee6b1f" stroke-width="0.7"/>
<rect x="346.40" y="347.00" width="2.40" height="5.40" fill="none" stroke="#ee6b1f" stroke-width="0.6"/>
<rect x="269.70" y="364.40" width="3.60" height="16.40" fill="#ffffff" stroke="#ee6b1f" stroke-width="0.8"/>
<rect x="270.50" y="366.40" width="2.00" height="4.20" fill="none" stroke="#ee6b1f" stroke-width="0.5"/>
<rect x="270.50" y="373.40" width="2.00" height="4.20" fill="none" stroke="#ee6b1f" stroke-width="0.5"/>
<path d="M274.6 355.6H278.4L280.3 358V386L278 388H275L273.3 384V360Z" fill="#ea5e12" fill-opacity=".95"/>
<rect x="277.40" y="363.00" width="3.00" height="9.00" fill="#ee6b1f" opacity="0.60"/>
<rect x="276.20" y="366.00" width="1.20" height="4.00" fill="#ffffff" opacity="0.70"/>
<rect x="278.40" y="374.40" width="1.40" height="2.60" fill="#ffffff" opacity="0.60"/>
<rect x="275.40" y="379.40" width="1.20" height="3.60" fill="#ffffff" opacity="0.50"/>
<rect x="280.40" y="354.60" width="7.60" height="4.60" fill="#ee6b1f" opacity="0.70"/>
<rect x="281.60" y="355.80" width="5.00" height="1.00" fill="#ffffff" opacity="0.70"/>
<rect x="280.50" y="359.30" width="7.20" height="9.20" fill="#ffffff" stroke="#ee6b1f" stroke-width="0.7"/>
<path d="M282.2 359.6V368.2M283.9 359.6V368.2M285.6 359.6V368.2M280.5 364H287.7" fill="none" stroke="#ee6b1f" stroke-width="0.7"/>
<rect x="280.50" y="368.60" width="7.20" height="1.30" fill="#ee6b1f" opacity="0.60"/>
<rect x="281.00" y="370.00" width="6.10" height="5.80" fill="#ffffff" stroke="#ee6b1f" stroke-width="0.6"/>
<rect x="288.00" y="355.00" width="5.90" height="25.00" fill="#ea5e12" opacity="0.90"/>
<rect x="289.40" y="358.60" width="1.20" height="3.80" fill="#ffffff" opacity="0.60"/>
<rect x="291.40" y="366.00" width="1.20" height="3.00" fill="#ffffff" opacity="0.60"/>
<rect x="289.00" y="372.00" width="1.40" height="3.60" fill="#ffffff" opacity="0.50"/>
<rect x="294.30" y="353.80" width="9.20" height="28.20" fill="#ee6b1f" opacity="0.62"/>
<rect x="296.00" y="355.40" width="6.00" height="4.40" fill="#ffffff" stroke="#ee6b1f" stroke-width="0.7"/>
<circle cx="299" cy="357.6" r="1.3" fill="#ee6b1f"/>
<rect x="295.00" y="361.60" width="7.80" height="1.80" fill="#ffffff" opacity="0.80"/>
<rect x="295.00" y="364.60" width="7.80" height="1.40" fill="#ea5e12" opacity="0.80"/>
<rect x="296.60" y="367.40" width="1.60" height="8.20" fill="#ffffff" opacity="0.75"/>
<rect x="299.60" y="367.40" width="1.80" height="5.20" fill="#ffffff" opacity="0.60"/>
<rect x="295.60" y="368.00" width="0.80" height="13.00" fill="#ea5e12" opacity="0.90"/>
<rect x="301.60" y="373.00" width="1.40" height="8.00" fill="#ea5e12" opacity="0.80"/>
<rect x="276.80" y="376.70" width="27.20" height="3.10" fill="#ea5e12" opacity="0.80"/>
<rect x="282.00" y="377.60" width="5.00" height="1.00" fill="#ffffff" opacity="0.60"/>
<rect x="296.60" y="377.60" width="4.00" height="1.00" fill="#ffffff" opacity="0.50"/>
<rect x="294.60" y="380.00" width="8.00" height="4.00" fill="#ee6b1f" opacity="0.50"/>
<rect x="304.00" y="360.00" width="2.00" height="7.60" fill="none" stroke="#ee6b1f" stroke-width="0.7"/>
<rect x="308.00" y="354.00" width="10.80" height="18.20" fill="#ffffff" stroke="#ee6b1f" stroke-width="0.8" rx="1.4"/>
<rect x="309.40" y="356.40" width="8.20" height="11.20" fill="#ee6b1f" opacity="0.92"/>
<circle cx="311.6" cy="360" r=".9" fill="#fff" fill-opacity=".8"/><circle cx="315.2" cy="360" r=".9" fill="#fff" fill-opacity=".8"/><circle cx="311.6" cy="364.4" r=".9" fill="#fff" fill-opacity=".8"/><circle cx="315.2" cy="364.4" r=".9" fill="#fff" fill-opacity=".8"/>
<rect x="310.40" y="354.20" width="6.20" height="1.80" fill="#ee6b1f" opacity="0.60"/>
<path d="M309 369.6H318" fill="none" stroke="#ee6b1f" stroke-width="0.6"/>
<rect x="321.80" y="354.00" width="11.90" height="18.20" fill="#ffffff" stroke="#ee6b1f" stroke-width="0.8" rx="1"/>
<rect x="322.60" y="356.60" width="10.40" height="3.40" fill="#ee6b1f" opacity="0.55"/>
<rect x="322.60" y="367.40" width="10.40" height="2.80" fill="#ee6b1f" opacity="0.60"/>
<circle cx="327.6" cy="363.8" r="2.9" fill="#ffffff" stroke="#ee6b1f" stroke-width=".9"/>
<rect x="324.00" y="354.20" width="7.00" height="1.80" fill="#ee6b1f" opacity="0.50"/>
<path d="M318.6 369L323.4 376.6H326" fill="none" stroke="#ee6b1f" stroke-width="0.7"/>
<rect x="326.00" y="371.80" width="3.20" height="7.60" fill="#ee6b1f" opacity="0.85"/>
<rect x="326.80" y="374.40" width="1.60" height="1.60" fill="#ffffff" opacity="0.70"/>
<rect x="335.00" y="356.40" width="11.80" height="16.40" fill="#ffffff" stroke="#ee6b1f" stroke-width="0.8"/>
<rect x="337.00" y="354.00" width="7.40" height="2.40" fill="#ee6b1f" opacity="0.85"/>
<rect x="339.20" y="359.00" width="3.40" height="9.40" fill="none" stroke="#ee6b1f" stroke-width="1.2" rx="1.4"/>
<path d="M339.2 361.8H342.6" fill="none" stroke="#ee6b1f" stroke-width="0.6"/>
<path d="M336.4 370.8H345.6" fill="none" stroke="#ee6b1f" stroke-width="0.6"/>
<rect x="337.00" y="301.40" width="1.00" height="1.00" fill="#ee6b1f" opacity="0.80"/>
<rect x="358.70" y="316.40" width="24.80" height="12.90" fill="#ffffff" stroke="#ee6b1f" stroke-width="0.9"/>
<rect x="358.70" y="323.10" width="24.80" height="3.40" fill="#ee6b1f" opacity="0.28"/>
<rect x="358.70" y="326.50" width="24.80" height="1.90" fill="#ee6b1f" opacity="0.14"/>
<path d="M358.7 323.1H383.5M358.7 326.5H383.5" fill="none" stroke="#ee6b1f" stroke-width="0.7"/>
<path d="M363 329.9H375.8" fill="none" stroke="#ea5f14" stroke-width="1.3"/>
<rect x="377.60" y="329.60" width="3.50" height="2.00" fill="#ea5f14" opacity="0.90"/>
<rect x="359.30" y="329.50" width="1.70" height="1.50" fill="#ee6b1f" opacity="0.60"/>
<rect x="280.60" y="383.80" width="7.70" height="10.40" fill="#ffffff"/>
<rect x="291.70" y="389.60" width="1.80" height="4.60" fill="#ffffff"/>
<path d="M276.9 381V458.4Q276.9 460.2 278.7 460.2H289.5Q291.3 460.2 291.3 458.4V381M280 381V458M288.7 381V458M276.9 410.7H280M288.7 410.7H291.3M276.9 434.8H280M288.7 434.8H291.3M278.4 458.6H290" fill="none" stroke="#ee6b1f" stroke-width="0.9"/>
<rect x="280.00" y="384.00" width="1.00" height="10.00" fill="#ee6b1f" opacity="0.50"/>
<path d="M283.7 417.4V408.6H282.8L284.5 404.8L286.2 408.6H285.3V417.4Z" fill="#fbd3bb" stroke="#ee6b1f" stroke-width=".7"/>
<rect x="272.20" y="417.90" width="4.70" height="6.90" fill="none" stroke="#ee6b1f" stroke-width="0.8"/>
<rect x="294.30" y="381.00" width="3.00" height="72.60" fill="#ee6b1f" opacity="0.66"/>
<rect x="300.20" y="381.00" width="3.00" height="72.60" fill="#ee6b1f" opacity="0.66"/>
<path d="M295.8 384V453" fill="none" stroke="#f9c3a2" stroke-width="0.6"/>
<path d="M301.7 384V453" fill="none" stroke="#f9c3a2" stroke-width="0.6"/>
<path d="M293.6 384V440M303.9 384V440" fill="none" stroke="#ee6b1f" stroke-width="0.5"/>
<path d="M293 438.6H304.8V443L303.6 444.4H294.2L293 443Z" fill="#ffffff" stroke="#ee6b1f" stroke-width=".8"/>
<rect x="297.00" y="439.40" width="4.00" height="4.20" fill="#ee6b1f" opacity="0.55"/>
<rect x="293.50" y="453.60" width="9.50" height="6.80" fill="#ffffff" stroke="#ee6b1f" stroke-width="0.85" rx="0.8"/>
<path d="M266.5 394.6H276.9M304.6 394.6H352.5" fill="none" stroke="#ee6b1f" stroke-width="1"/>
<path d="M273.2 388.7H280.4M288.4 388.7H295.4" fill="none" stroke="#ee6b1f" stroke-width="1.4"/>
</g></g>
</g>
</svg>
</body></html>
